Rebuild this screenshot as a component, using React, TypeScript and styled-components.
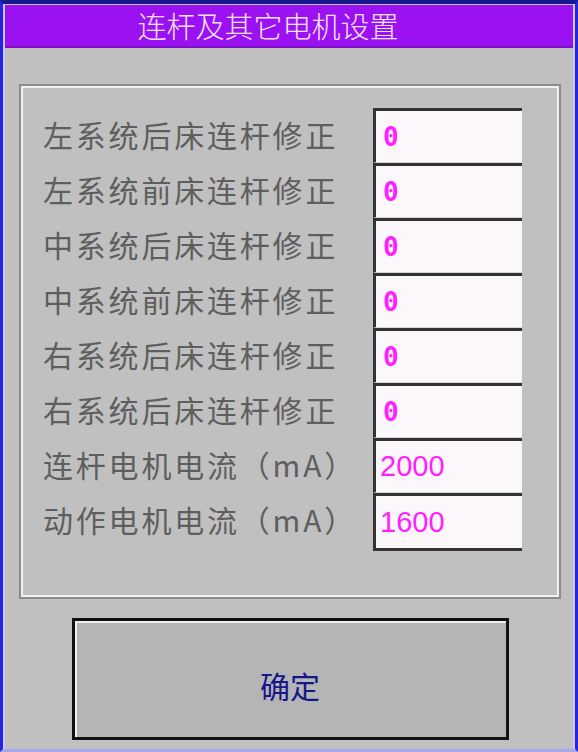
import styled, { createGlobalStyle } from "styled-components";

const CJK = `"Noto Sans CJK SC", "Noto Sans", sans-serif`;

const ROWS = [
  { label: "左系统后床连杆修正", value: "0", mono: true },
  { label: "左系统前床连杆修正", value: "0", mono: true },
  { label: "中系统后床连杆修正", value: "0", mono: true },
  { label: "中系统前床连杆修正", value: "0", mono: true },
  { label: "右系统后床连杆修正", value: "0", mono: true },
  { label: "右系统后床连杆修正", value: "0", mono: true },
  { label: "连杆电机电流（mA）", value: "2000", mono: false },
  { label: "动作电机电流（mA）", value: "1600", mono: false },
];

export default function App() {
  return (
    <>
      <GlobalStyle />
      <Frame>
        <TitleBar>连杆及其它电机设置</TitleBar>
        <Body>
          <GroupBox>
            <Grid>
              {ROWS.map((row, index) => (
                <Row key={index}>
                  <Label>{row.label}</Label>
                  <ValueBox $last={index === ROWS.length - 1}>
                    <Value $mono={row.mono}>{row.value}</Value>
                  </ValueBox>
                </Row>
              ))}
            </Grid>
          </GroupBox>
          <ConfirmButton>确定</ConfirmButton>
        </Body>
      </Frame>
    </>
  );
}

const GlobalStyle = createGlobalStyle`
  * {
    box-sizing: border-box;
  }

  body {
    margin: 0;
    background: #c0c0c0;
    font-family: ${CJK};
  }
`;

const Frame = styled.div`
  display: flex;
  flex-direction: column;
  width: 578px;
  height: 752px;
  padding: 1px 2px 0;
  background: #c0c0c0;
  border-top: 4px solid #18188e;
  border-left: 3px solid #2424e4;
  border-right: 3px solid #2424e4;
  border-bottom: 3px solid #a8a8f0;
  box-shadow: inset 2px 0 0 #cfc8ee, inset -2px 0 0 #cfc8ee;
`;

const TitleBar = styled.div`
  display: flex;
  align-items: center;
  justify-content: center;
  height: 43px;
  padding-right: 42px;
  background: #9a12f2;
  border-bottom: 2px solid #7c10c4;
  color: #f8e2f8;
  font-size: 29px;
  font-weight: 300;
  line-height: 1;
`;

const Body = styled.div`
  display: flex;
  flex-direction: column;
  padding: 36px 12px 0 14px;
`;

const GroupBox = styled.div`
  height: 515px;
  padding: 22px 0 0 22px;
  border: 2px solid #8c8c8c;
  box-shadow: inset 0 0 0 2px #f2f2f2;
`;

const Grid = styled.div`
  display: grid;
  grid-template-columns: 330px 149px;
`;

const Row = styled.div`
  display: contents;
`;

const Label = styled.div`
  display: flex;
  align-items: center;
  height: 55px;
  padding-bottom: 4px;
  color: #5e5e5e;
  font-size: 30px;
  letter-spacing: 2.8px;
  white-space: nowrap;
`;

const ValueBox = styled.div<{ $last: boolean }>`
  display: flex;
  align-items: center;
  height: ${(p) => (p.$last ? "58px" : "55px")};
  padding-left: 4px;
  background: #fbf7fb;
  border-top: 3px solid #333333;
  border-left: 3px solid #333333;
  border-bottom: ${(p) => (p.$last ? "3px solid #333333" : "1px solid #d8d8d8")};
`;

const Value = styled.span<{ $mono: boolean }>`
  color: #ff20ff;
  font-family: ${(p) =>
    p.$mono ? `"DejaVu Sans Mono", monospace` : `"Liberation Sans", sans-serif`};
  font-size: ${(p) => (p.$mono ? "26px" : "29px")};
  font-weight: ${(p) => (p.$mono ? 700 : 400)};
  padding-left: ${(p) => (p.$mono ? "3px" : "0")};
  line-height: 1;
`;

const ConfirmButton = styled.button`
  align-self: center;
  width: 437px;
  height: 122px;
  margin-top: 19px;
  padding-top: 12px;
  background: #b5b5b5;
  border: 3px solid #111111;
  box-shadow: inset 2px 2px 0 #f0f0f0;
  color: #16168c;
  font-family: ${CJK};
  font-size: 30px;
`;
